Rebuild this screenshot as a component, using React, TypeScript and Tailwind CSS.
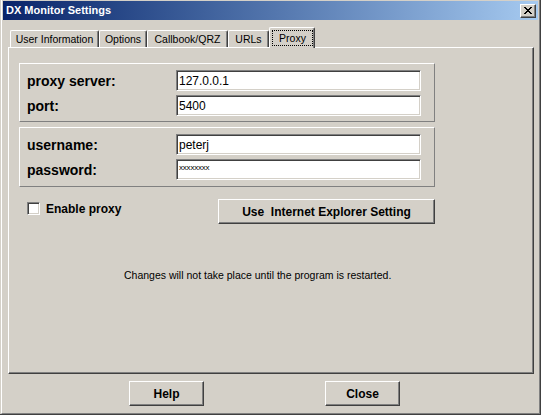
import React from 'react';

const raised =
  'border-t border-l border-t-white border-l-white border-r border-b border-r-[#404040] border-b-[#404040] shadow-[inset_-1px_-1px_0_#808080]';
const sunken =
  'border-t border-l border-t-[#808080] border-l-[#808080] border-r border-b border-r-white border-b-white shadow-[inset_1px_1px_0_#404040,inset_-1px_-1px_0_#d4d0c8] bg-white';

const tabs = [
  { label: 'User Information', w: 'w-[89px]' },
  { label: 'Options', w: 'w-[48px]' },
  { label: 'Callbook/QRZ', w: 'w-[81px]' },
  { label: 'URLs', w: 'w-[41px]' },
];

function CloseGlyph() {
  // classic 8x7 pixel X
  const rows = ['11000011', '01100110', '00111100', '00011000', '00111100', '01100110', '11000011'];
  return (
    <svg width="8" height="7" viewBox="0 0 8 7" shapeRendering="crispEdges">
      {rows.map((r, y) =>
        r.split('').map((c, x) => (c === '1' ? <rect key={`${x}-${y}`} x={x} y={y} width="1" height="1" fill="#000" /> : null))
      )}
    </svg>
  );
}

function Field({ label, value, small }: { label: string; value: string; small?: boolean }) {
  return (
    <div className="flex items-center">
      <div className="w-[149px] text-[14px] font-bold text-black leading-none">{label}</div>
      <div className={`${sunken} w-[245px] h-[21px] flex items-center pl-[2px] text-black`}>
        {small ? (
          <span className="text-[8px] leading-none -mt-[3px] tracking-[-0.2px]">{value}</span>
        ) : (
          <span className="text-[12px] leading-none">{value}</span>
        )}
      </div>
    </div>
  );
}

export default function App() {
  return (
    <div className="w-[541px] h-[415px] bg-[#d4d0c8] border-r border-b border-r-[#404040] border-b-[#404040] font-['Liberation_Sans',Arial,sans-serif] overflow-hidden">
      <div className="h-full border-l border-l-white border-r border-b border-r-[#808080] border-b-[#808080] ml-px flex flex-col">
        {/* title bar */}
        <div className="h-[19px] mt-px mx-px flex items-center justify-between pl-[3px] pr-[2px] bg-linear-to-r from-[#0a246a] to-[#a6caf0]">
          <span className="text-[11px] font-bold text-white leading-none">DX Monitor Settings</span>
          <div className={`${raised} bg-[#d4d0c8] w-[16px] h-[14px] flex items-center justify-center`}>
            <CloseGlyph />
          </div>
        </div>

        {/* tabs */}
        <div className="flex items-end ml-[8px] mt-[7px] text-[10.5px] text-black">
          {tabs.map((t) => (
            <div
              key={t.label}
              className={`${t.w} h-[17px] border-t border-l border-t-white border-l-white border-r border-r-[#404040] shadow-[inset_-1px_0_0_#808080] rounded-t-[2px] flex items-center justify-center leading-none`}
            >
              {t.label}
            </div>
          ))}
          <div className="relative z-10 -mb-px w-[46px] h-[21px] bg-[#d4d0c8] border-t border-l border-t-white border-l-white border-r border-r-[#404040] shadow-[inset_-1px_0_0_#808080] rounded-t-[2px] flex justify-center pt-[2px] pl-px">
            <span className="w-[41px] h-[16px] border border-dotted border-black flex items-center justify-center leading-none">
              Proxy
            </span>
          </div>
        </div>

        {/* tab panel */}
        <div className={`${raised} w-[526px] h-[327px] ml-[6px] pl-[10px] pt-[15px] flex flex-col text-black`}>
          <div className="w-[416px] border-t border-l border-t-white border-l-white border-r border-b border-r-[#808080] border-b-[#808080] pl-[7px] pt-[6px] pb-[5px] flex flex-col gap-[4px]">
            <Field label="proxy server:" value="127.0.0.1" />
            <Field label="port:" value="5400" />
          </div>
          <div className="w-[416px] mt-[5px] border-t border-l border-t-white border-l-white border-r border-b border-r-[#808080] border-b-[#808080] pl-[7px] pt-[6px] pb-[6px] flex flex-col gap-[4px]">
            <Field label="username:" value="peterj" />
            <Field label="password:" value="xxxxxxxx" small />
          </div>

          <div className="flex items-start mt-[12px] ml-[8px]">
            <div className="w-[191px] flex items-center gap-[6px] mt-[3px]">
              <div className={`${sunken} w-[13px] h-[13px]`} />
              <span className="text-[12px] font-bold leading-none">Enable proxy</span>
            </div>
            <button className={`${raised} bg-[#d4d0c8] w-[217px] h-[25px] text-[12px] font-bold leading-none whitespace-pre`}>
              Use  Internet Explorer Setting
            </button>
          </div>

          <p className="mt-[44px] ml-[105px] text-[10.5px] leading-[14px]">
            Changes will not take place until the program is restarted.
          </p>
        </div>

        {/* bottom buttons */}
        <div className="flex mt-[7px] ml-[127px] gap-[121px]">
          <button className={`${raised} bg-[#d4d0c8] w-[75px] h-[25px] text-[12px] font-bold text-black leading-none`}>Help</button>
          <button className={`${raised} bg-[#d4d0c8] w-[75px] h-[25px] text-[12px] font-bold text-black leading-none`}>Close</button>
        </div>
      </div>
    </div>
  );
}
